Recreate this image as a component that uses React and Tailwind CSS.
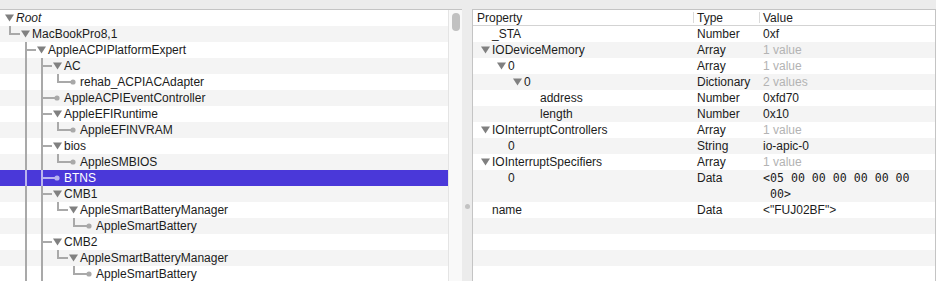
const tree = [
  { label: 'Root', level: 0, italic: true },
  { label: 'MacBookPro8,1', level: 1 },
  { label: 'AppleACPIPlatformExpert', level: 2 },
  { label: 'AC', level: 3 },
  { label: 'rehab_ACPIACAdapter', level: 4, leaf: true },
  { label: 'AppleACPIEventController', level: 3, leaf: true },
  { label: 'AppleEFIRuntime', level: 3 },
  { label: 'AppleEFINVRAM', level: 4, leaf: true },
  { label: 'bios', level: 3 },
  { label: 'AppleSMBIOS', level: 4, leaf: true },
  { label: 'BTNS', level: 3, leaf: true, selected: true },
  { label: 'CMB1', level: 3 },
  { label: 'AppleSmartBatteryManager', level: 4 },
  { label: 'AppleSmartBattery', level: 5, leaf: true },
  { label: 'CMB2', level: 3 },
  { label: 'AppleSmartBatteryManager', level: 4 },
  { label: 'AppleSmartBattery', level: 5, leaf: true },
];

// rows below the visible area keep these branches open
const allRows = [...tree, { level: 3 }, { level: 2 }];

function continues(i, k) {
  for (let j = i + 1; j < allRows.length; j++) {
    if (allRows[j].level === k) return true;
    if (allRows[j].level < k) return false;
  }
  return false;
}

const props = [
  { name: '_STA', level: 0, type: 'Number', value: '0xf' },
  { name: 'IODeviceMemory', level: 0, type: 'Array', value: '1 value', dim: true, open: true },
  { name: '0', level: 1, type: 'Array', value: '1 value', dim: true, open: true },
  { name: '0', level: 2, type: 'Dictionary', value: '2 values', dim: true, open: true },
  { name: 'address', level: 3, type: 'Number', value: '0xfd70' },
  { name: 'length', level: 3, type: 'Number', value: '0x10' },
  { name: 'IOInterruptControllers', level: 0, type: 'Array', value: '1 value', dim: true, open: true },
  { name: '0', level: 1, type: 'String', value: 'io-apic-0' },
  { name: 'IOInterruptSpecifiers', level: 0, type: 'Array', value: '1 value', dim: true, open: true },
  { name: '0', level: 1, type: 'Data', mono: ['<05 00 00 00 00 00 00', ' 00>'] },
  { name: 'name', level: 0, type: 'Data', value: '<"FUJ02BF">' },
];

function TreeRow({ node, index }) {
  const { level, label, leaf, italic, selected } = node;
  const line = selected ? '#b9b3ee' : '#a9a9a9';
  const w = 16 * level + 16;
  const x0 = 9 + 16 * (level - 1);
  const stripe = selected ? 'bg-[#4a38d9] text-white' : index % 2 ? 'bg-[#f4f4f4] text-[#1c1c1c]' : 'bg-white text-[#1c1c1c]';

  return (
    <div className={`flex h-4 shrink-0 items-center ${stripe}`}>
      <svg width={w} height="16" className="shrink-0">
        {Array.from({ length: Math.max(level - 1, 0) }, (_, k) =>
          continues(index, k + 1) ? (
            <rect key={k} x={9 + 16 * k} y="0" width="2" height="16" fill={line} />
          ) : null
        )}
        {level > 0 && (
          <>
            <rect x={x0} y="0" width="2" height={continues(index, level) ? 16 : 9} fill={line} />
            <rect x={x0} y="7" width={(leaf ? 16 * level + 8 : 16 * level + 4) - x0} height="2" fill={line} />
          </>
        )}
        {leaf ? (
          <circle cx={16 * level + 9} cy="8" r="2.6" fill={line} />
        ) : (
          <polygon
            points={`${16 * level + 5},4.5 ${16 * level + 14},4.5 ${16 * level + 9.5},11.5`}
            fill={selected ? '#d0ccf5' : '#808080'}
          />
        )}
      </svg>
      <span className={`whitespace-nowrap text-[12px] leading-4 ${italic ? 'italic' : ''}`}>{label}</span>
    </div>
  );
}

function Triangle() {
  return (
    <svg width="11" height="16" className="shrink-0">
      <polygon points="0,4.5 9,4.5 4.5,11.5" fill="#808080" />
    </svg>
  );
}

function PropRow({ row, index }) {
  const tall = !!row.mono;
  return (
    <div
      className={`flex shrink-0 items-start text-[12px] leading-4 text-[#1c1c1c] ${tall ? 'h-8' : 'h-4'} ${
        index % 2 ? 'bg-[#f4f4f4]' : 'bg-white'
      }`}
    >
      <div className="flex w-[221px] shrink-0 items-start" style={{ paddingLeft: 8 + 16 * row.level }}>
        {row.open ? <Triangle /> : <span className="w-[11px] shrink-0" />}
        <span className="whitespace-nowrap">{row.name}</span>
      </div>
      <div className="w-[66px] shrink-0 whitespace-nowrap pl-[3px]">{row.type}</div>
      <div className="whitespace-nowrap pl-[3px]">
        {row.mono ? (
          <div className="whitespace-pre font-['DejaVu_Sans_Mono',monospace] text-[11.6px] leading-4">
            {row.mono[0]}
            <br />
            {row.mono[1]}
          </div>
        ) : (
          <span className={row.dim ? 'text-[#b3b3b3]' : ''}>{row.value}</span>
        )}
      </div>
    </div>
  );
}

export default function App() {
  return (
    <div className="flex h-[281px] w-[936px] flex-col overflow-hidden bg-[#ececec] font-['Liberation_Sans',Arial,sans-serif]">
      <div className="h-[9px] shrink-0" />
      <div className="flex min-h-0 flex-1">
        {/* device tree */}
        <div className="flex w-[462px] shrink-0 border-t border-[#c4c4c4]">
          <div className="flex w-[448px] shrink-0 flex-col overflow-hidden">
            {tree.map((node, i) => (
              <TreeRow key={i} node={node} index={i} />
            ))}
          </div>
          <div className="flex-1 border-l border-[#e4e4e4] bg-[#f9f9f9] pl-[3px] pt-[3px]">
            <div className="h-[18px] w-[8px] rounded-full bg-[#c1c1c1]" />
          </div>
        </div>

        {/* split handle */}
        <div className="flex w-[10px] shrink-0 justify-center pt-[195px]">
          <div className="h-[5px] w-[5px] rounded-full bg-[#c2c2c2]" />
        </div>

        {/* property table */}
        <div className="flex min-w-0 flex-1 flex-col overflow-hidden border-x border-t border-[#c4c4c4] bg-white">
          <div className="flex h-4 shrink-0 items-center border-b border-[#d3d3d3] text-[12px] leading-4 text-[#1c1c1c]">
            <div className="flex w-[221px] shrink-0 items-center justify-between pl-[4px]">
              <span>Property</span>
              <span className="h-[11px] w-px bg-[#dadada]" />
            </div>
            <div className="flex w-[66px] shrink-0 items-center justify-between pl-[3px]">
              <span>Type</span>
              <span className="h-[11px] w-px bg-[#dadada]" />
            </div>
            <div className="pl-[3px]">Value</div>
          </div>
          {props.map((row, i) => (
            <PropRow key={i} row={row} index={i} />
          ))}
          {[0, 1, 2, 3].map((n) => (
            <div key={n} className={`h-4 shrink-0 ${(props.length + n) % 2 ? 'bg-[#f4f4f4]' : 'bg-white'}`} />
          ))}
        </div>
      </div>
    </div>
  );
}
